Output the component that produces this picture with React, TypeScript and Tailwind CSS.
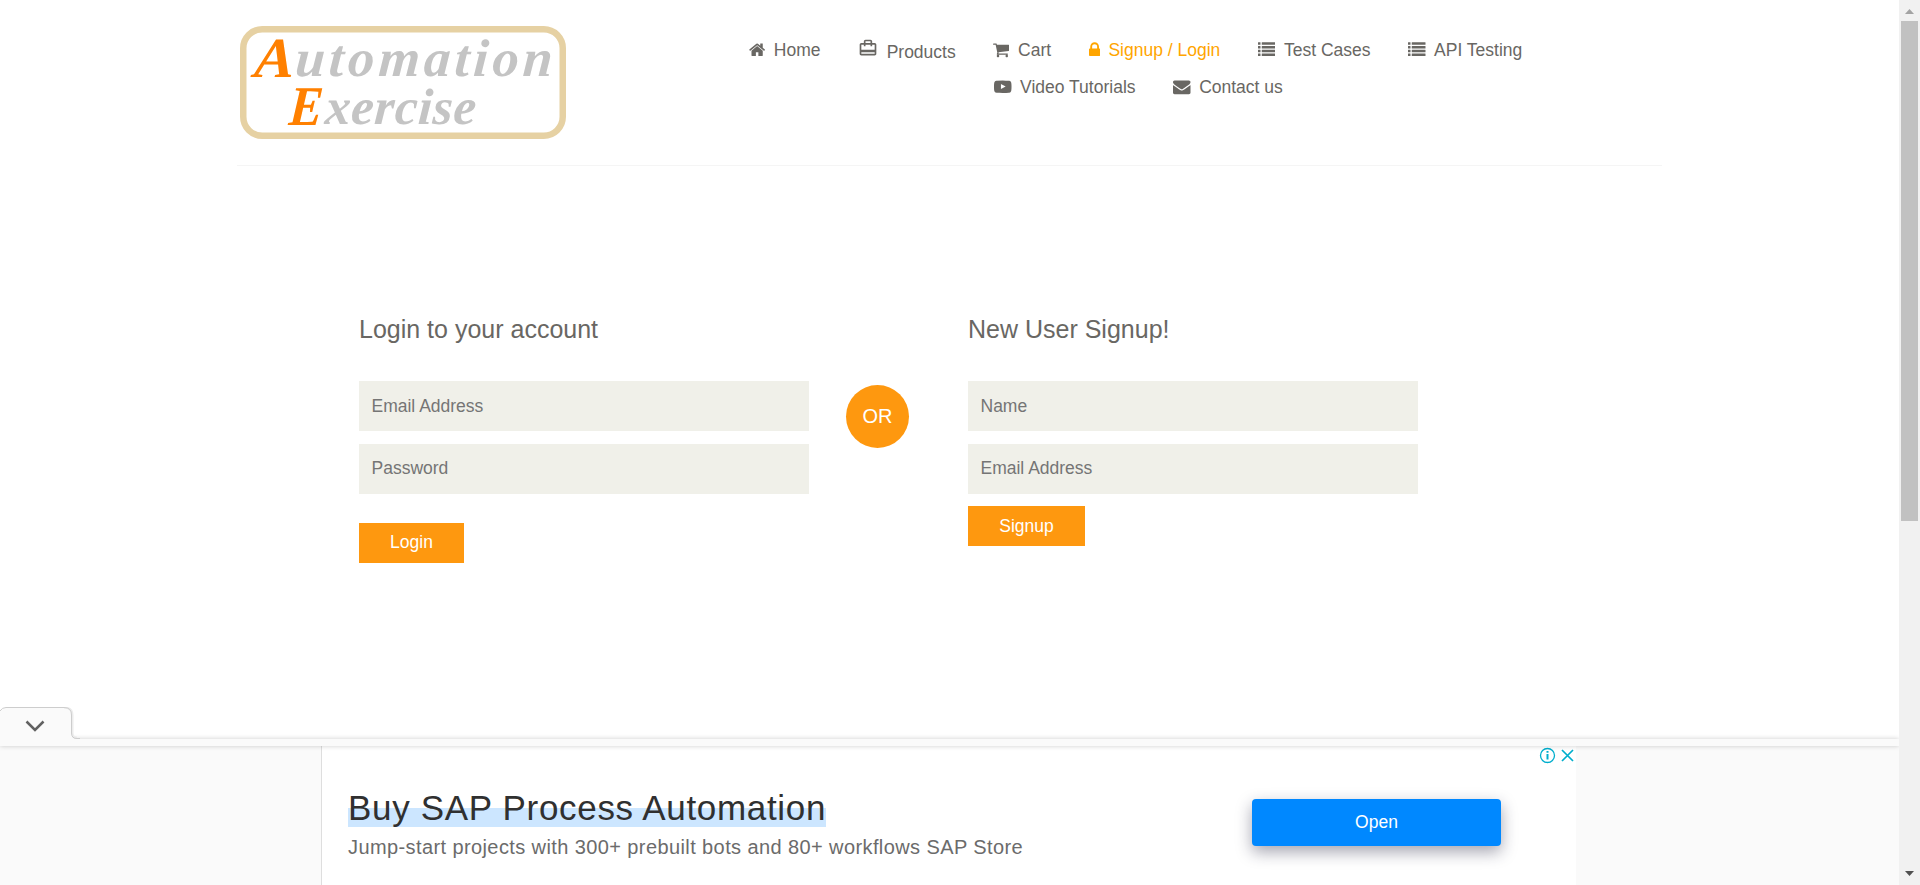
import React from "react";

type IconProps = { viewBox: string; className: string; children: React.ReactNode };

function Icon({ viewBox, className, children }: IconProps) {
  return (
    <svg viewBox={viewBox} className={`shrink-0 fill-current ${className}`} aria-hidden="true">
      {children}
    </svg>
  );
}

const HomeIcon = () => (
  <Icon viewBox="64 0 1664 1792" className="h-[17.5px] w-[16.25px]">
    <path d="M1472 992v480q0 26-19 45t-45 19h-384v-384h-256v384h-384q-26 0-45-19t-19-45v-480q0-1 .5-3t.5-3l575-474 575 474q1 2 1 6zm223-69l-62 74q-8 9-21 11h-3q-13 0-21-7l-692-577-692 577q-12 8-24 7-13-2-21-11l-62-74q-8-10-7-23.5t11-21.5l719-599q32-26 76-26t76 26l244 204v-195q0-14 9-23t23-9h192q14 0 23 9t9 23v408l219 182q10 8 11 21.5t-7 23.5z" />
  </Icon>
);

const CaseIcon = () => (
  <Icon viewBox="0 0 24 24" className="relative -top-[4px] h-5 w-5">
    <path d="M20 6h-3V4c0-1.11-.89-2-2-2H9c-1.11 0-2 .89-2 2v2H4c-1.11 0-2 .89-2 2v11c0 1.11.89 2 2 2h16c1.11 0 2-.89 2-2V8c0-1.11-.89-2-2-2zM9 4h6v2H9V4zm11 15H4v-2h16v2zm0-5H4V8h3v2h2V8h6v2h2V8h3v6z" />
  </Icon>
);

const CartIcon = () => (
  <Icon viewBox="64 0 1664 1792" className="h-[17.5px] w-[16.25px]">
    <path d="M704 1536q0 52-38 90t-90 38-90-38-38-90 38-90 90-38 90 38 38 90zm896 0q0 52-38 90t-90 38-90-38-38-90 38-90 90-38 90 38 38 90zm128-1088v512q0 24-16.5 42.5t-40.5 21.5l-1044 122q13 60 13 70 0 16-24 64h920q26 0 45 19t19 45-19 45-45 19h-1024q-26 0-45-19t-19-45q0-11 8-31.5t16-36 21.5-40 15.5-29.5l-177-823h-204q-26 0-45-19t-19-45 19-45 45-19h256q16 0 28.5 6.5t19.5 15.5 13 24.5 8 26 5.500 29.500 4.500 26h1201q26 0 45 19t19 45z" />
  </Icon>
);

const LockIcon = () => (
  <Icon viewBox="320 0 1152 1792" className="h-[17.5px] w-[11.25px]">
    <path d="M640 768h512v-192q0-106-75-181t-181-75-181 75-75 181v192zm832 96v576q0 40-28 68t-68 28h-960q-40 0-68-28t-28-68v-576q0-40 28-68t68-28h32v-192q0-184 132-316t316-132 316 132 132 316v192h32q40 0 68 28t28 68z" />
  </Icon>
);

const ListIcon = () => (
  <Icon viewBox="0 0 1792 1792" className="h-[17.5px] w-[17.5px]">
    {[128, 512, 896, 1280].map((y) => (
      <g key={y}>
        <rect x="0" y={y} width="256" height="256" rx="32" />
        <rect x="384" y={y} width="1408" height="256" rx="32" />
      </g>
    ))}
  </Icon>
);

const VideoIcon = () => (
  <Icon viewBox="0 0 1792 1792" className="h-[17.5px] w-[17.5px]">
    <path d="M711 1128l484-250-484-253v503zm185-862q168 0 324.5 4.5t229.5 9.5l73 4q1 0 17 1.5t23 3 23.5 4.5 28.5 8 28 13 31 19.5 29 26.5q6 6 15.5 18.5t29 58.5 26.5 101q8 64 12.5 136.5t5.5 113.5v176q1 145-18 290-7 55-25 99.5t-32 61.5l-14 17q-14 15-29 26.5t-31 19-28 12.5-28.5 8-24 4.5-23 3-16.5 1.5q-251 19-627 19-207-2-359.5-6.5t-200.5-7.5l-49-4-36-4q-36-5-54.5-10t-51-21-56.5-41q-6-6-15.5-18.5t-29-58.5-26.5-101q-8-64-12.5-136.5t-5.5-113.5v-176q-1-145 18-290 7-55 25-99.5t32-61.5l14-17q14-15 29-26.5t31-19.5 28-13 28.5-8 23.5-4.5 23-3 17-1.5q251-18 627-18z" />
  </Icon>
);

const MailIcon = () => (
  <Icon viewBox="0 0 1792 1792" className="h-[17.5px] w-[17.5px]">
    <path d="M1792 710v794q0 66-47 113t-113 47h-1472q-66 0-113-47t-47-113v-794q44 49 101 87 362 246 497 345 57 42 92.5 65.5t94.5 48 110 24.5h2q51 0 110-24.5t94.5-48 92.5-65.5q170-123 498-345 57-39 100-87zm0-294q0 79-49 151t-122 123q-376 261-468 325-10 7-42.5 31t-54 38.5-52 32.5-57.5 27-50 9h-2q-23 0-50-9t-57.5-27-52-32.5-54-38.5-42.5-31q-91-64-262-182.5t-205-142.5q-62-42-117-115.5t-55-136.5q0-78 41.5-130t118.5-52h1472q65 0 112.5 47t47.5 113z" />
  </Icon>
);

function NavItem({ icon, label, className = "" }: { icon: React.ReactNode; label: string; className?: string }) {
  return (
    <li className={`h-[25px] ${className}`}>
      <a className="flex h-[25px] items-center gap-[8.6px] whitespace-nowrap leading-[25px]">
        {icon}
        <span className="pt-[2px]">{label}</span>
      </a>
    </li>
  );
}

function Logo() {
  return (
    <svg
      viewBox="0 0 326 113"
      className="h-[113px] w-[326px] font-['Liberation_Serif',serif] font-bold italic"
      role="img"
      aria-label="Automation Exercise"
    >
      <rect x="3.25" y="3.25" width="319.5" height="106.5" rx="19" fill="none" stroke="#e6d1a3" strokeWidth="6.5" />
      <g transform="skewX(-4)">
        <text x="17" y="51" fontSize="57" fill="#ff8000" textLength="40" lengthAdjust="spacingAndGlyphs">A</text>
        <text x="58" y="50" fontSize="53" fill="#c4c4c4" textLength="257" lengthAdjust="spacing">utomation</text>
        <text x="55" y="99" fontSize="56" fill="#ff8000" textLength="34" lengthAdjust="spacingAndGlyphs">E</text>
        <text x="91" y="98" fontSize="51" fill="#c4c4c4" textLength="151" lengthAdjust="spacing">xercise</text>
      </g>
    </svg>
  );
}

const inputClass =
  "block h-[50px] w-[450px] bg-[#f0f0e9] pl-[12.5px] text-[17.5px] text-[#696763] outline-none placeholder:text-[#757575]";
const buttonClass = "block h-10 bg-[#fe980f] text-center text-[17.5px] text-white";
const headingClass = "h-[50px] text-[25px] leading-[28px] font-normal";

export default function App() {
  return (
    <div className="flex h-[885px] w-[1920px] overflow-hidden bg-white font-['Liberation_Sans',Arial,sans-serif] text-[17.5px] text-[#696763]">
      <div className="flex w-[1899px] flex-col overflow-hidden">
        <header className="mx-[237px] flex h-[166px] border-b border-[#f5f5f5] pt-[26px]">
          <div className="w-[512px] pl-[2.5px]">
            <Logo />
          </div>
          <nav className="pt-[11px]">
            <ul className="flex gap-[37.5px]">
              <NavItem icon={<HomeIcon />} label="Home" />
              <NavItem icon={<CaseIcon />} label="Products" className="pt-[2px]" />
              <NavItem icon={<CartIcon />} label="Cart" />
              <NavItem icon={<LockIcon />} label="Signup / Login" className="text-[#ffa500]" />
              <NavItem icon={<ListIcon />} label="Test Cases" />
              <NavItem icon={<ListIcon />} label="API Testing" />
            </ul>
            <ul className="mt-3 flex gap-[37.5px] pl-[245px]">
              <NavItem icon={<VideoIcon />} label="Video Tutorials" />
              <NavItem icon={<MailIcon />} label="Contact us" />
            </ul>
          </nav>
        </header>

        <main className="flex pt-[149px] pl-[359px]">
          <form className="w-[450px]">
            <h2 className={headingClass}>Login to your account</h2>
            <div className="mt-4 flex flex-col gap-[13px]">
              <input className={inputClass} placeholder="Email Address" />
              <input className={`pb-[2px] ${inputClass}`} placeholder="Password" />
            </div>
            <button type="button" className={`mt-[29px] w-[105px] pb-[2px] ${buttonClass}`}>Login</button>
          </form>
          <div className="mt-[70px] ml-[37px] flex h-[63px] w-[63px] items-center justify-center rounded-full bg-[#fe980f] pb-[2px] text-xl text-white">
            OR
          </div>
          <form className="ml-[59px] w-[450px]">
            <h2 className={headingClass}>New User Signup!</h2>
            <div className="mt-4 flex flex-col gap-[13px]">
              <input className={inputClass} placeholder="Name" />
              <input className={`pb-[2px] ${inputClass}`} placeholder="Email Address" />
            </div>
            <button type="button" className={`mt-3 w-[117px] ${buttonClass}`}>Signup</button>
          </form>
        </main>

        <aside className="mt-auto">
          <svg viewBox="0 0 80 36" className="relative z-10 -mb-1 block h-9 w-20">
            <path d="M0 5Q1 1 5 1H64Q71 1 71 8V26Q71 32 77 32H80V36H0Z" fill="#fafafa" />
            <path d="M64 .5Q72.500 .5 72.500 8V26Q72.500 30.500 77 30.500" fill="none" stroke="#ececec" strokeWidth="2" />
            <path d="M0 4Q2 .5 6 .5H64Q71.500 .5 71.500 8V26Q71.500 31.500 77 31.500H80" fill="none" stroke="#cdcdcd" />
            <path d="M26.500 14.500L35 23L43.500 14.500" fill="none" stroke="#616161" strokeWidth="2.5" />
          </svg>
          <div className="relative h-[7px] bg-[#fafafa] shadow-[0_0_5px_rgba(0,0,0,0.2)]" />
          <div className="flex h-[139px] bg-[#fafafa] pl-[321px]">
            <div className="flex w-[1255px] border-l border-[#dedede] bg-white">
              <div className="w-[904px] shrink-0 pt-[42px] pl-[26px] whitespace-nowrap">
                <div className="inline-block bg-[linear-gradient(transparent_20px,#cce6ff_20px)] text-[35px] leading-[39px] tracking-[0.68px] text-[#303030]">
                  Buy SAP Process Automation
                </div>
                <div className="mt-[8px] text-xl leading-6 tracking-[0.4px] text-[#6b6b6b]">
                  Jump-start projects with 300+ prebuilt bots and 80+ workflows SAP Store
                </div>
              </div>
              <div className="pt-[53px] pl-[26px]">
                <div className="flex h-[47px] w-[249px] items-center justify-center rounded-[4px] bg-[#0088ff] text-[17.5px] text-white shadow-[0_6px_16px_rgba(30,30,60,0.4)]">
                  Open
                </div>
              </div>
              <svg viewBox="0 0 40 18" className="ml-[36px] h-[18px] w-10 shrink-0" fill="none" stroke="#00aecd">
                <circle cx="10.500" cy="9.500" r="7" strokeWidth="1.3" />
                <path d="M10.500 8V13.500M10.500 5V6.800" strokeWidth="2" />
                <path d="M25 4L36 15M36 4L25 15" strokeWidth="1.700" />
              </svg>
            </div>
          </div>
        </aside>
      </div>

      <div className="flex w-[21px] flex-col items-center bg-[#f1f1f1]">
        <svg viewBox="0 0 21 21" className="h-[21px] w-[21px]">
          <path d="M6 14L10.500 9L15 14Z" fill="#a3a3a3" />
        </svg>
        <div className="h-[500px] w-[17px] bg-[#c1c1c1]" />
        <svg viewBox="0 0 21 21" className="mt-auto h-[21px] w-[21px]">
          <path d="M6 7L10.500 12L15 7Z" fill="#505050" />
        </svg>
      </div>
    </div>
  );
}
